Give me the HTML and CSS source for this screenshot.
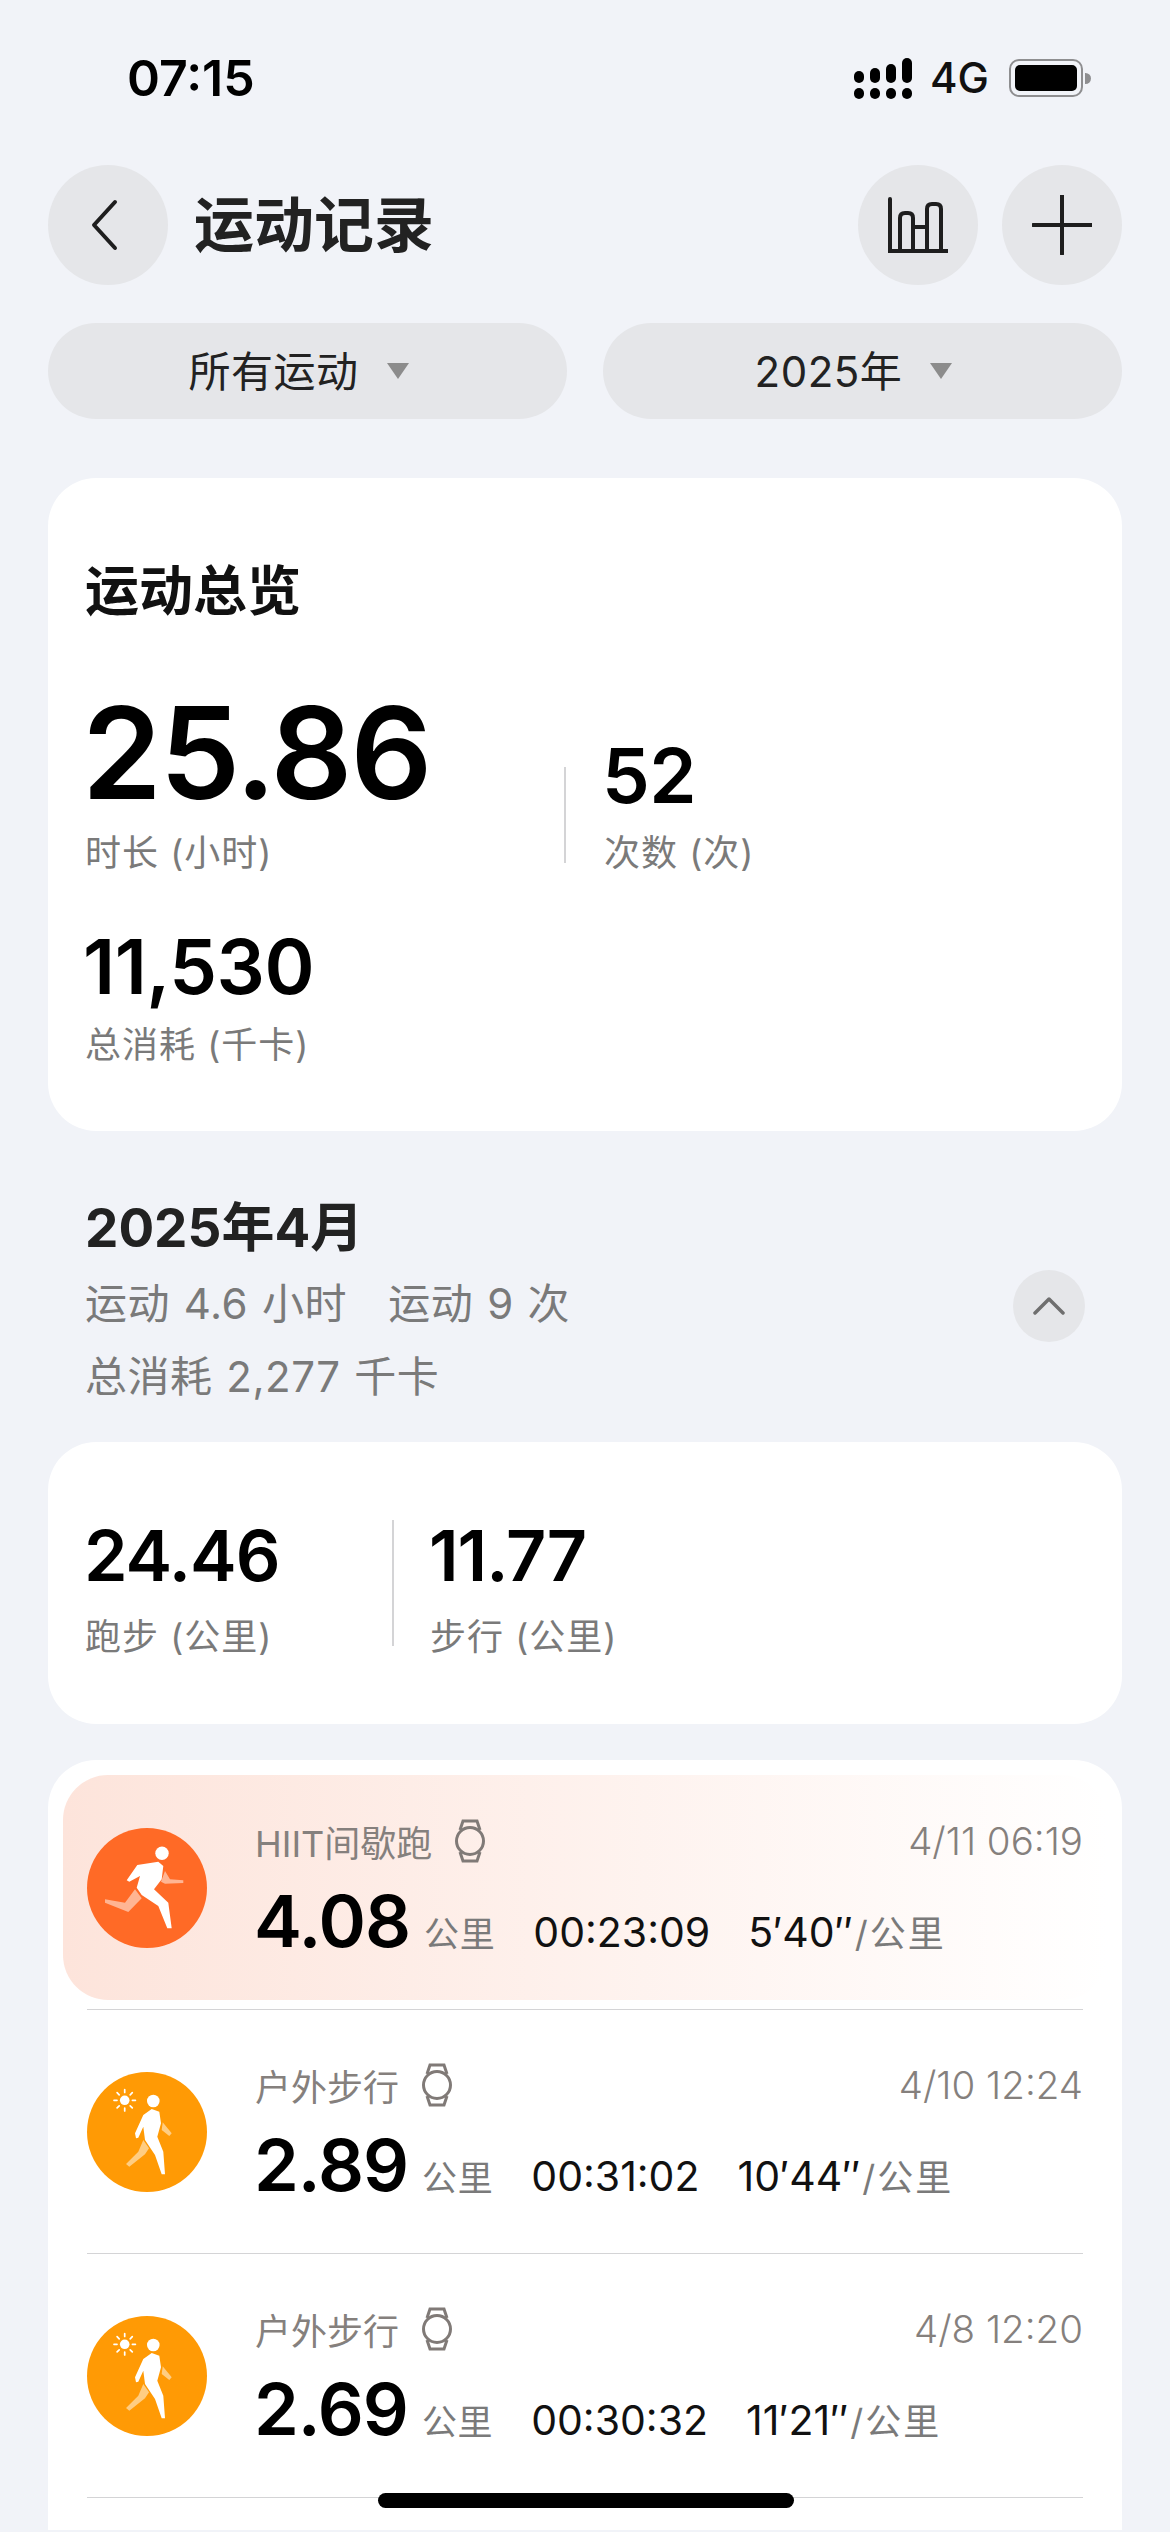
FILE: index.html
```html
<!DOCTYPE html>
<html lang="zh">
<head>
    <meta charset="UTF-8">
    <meta name="viewport" content="width=device-width, initial-scale=1.0">
    <title>运动记录</title>
    <link rel="stylesheet" href="styles.css">
</head>
<body>
    <div class="status-bar">
        <span class="clock">07:15</span>
        <div class="status-right">
            <svg class="signal" width="58" height="41" viewBox="0 0 58 41">
                <rect x="0" y="13" width="10" height="12" rx="5"/>
                <rect x="16" y="10" width="10" height="15" rx="5"/>
                <rect x="32" y="6" width="10" height="19" rx="5"/>
                <rect x="48" y="0" width="10" height="25" rx="5"/>
                <rect x="0" y="30" width="10" height="11" rx="5"/>
                <rect x="16" y="30" width="10" height="11" rx="5"/>
                <rect x="32" y="30" width="10" height="11" rx="5"/>
                <rect x="48" y="30" width="10" height="11" rx="5"/>
            </svg>
            <span class="net">4G</span>
            <div class="battery"><div class="battery-level"></div></div>
            <div class="battery-tip"></div>
        </div>
    </div>

    <header class="top-bar">
        <button class="round-btn">
            <svg width="60" height="60" viewBox="0 0 60 60"><path class="icon-line" d="M37 7 L16 30 L37 53"/></svg>
        </button>
        <h1 class="page-title">运动记录</h1>
        <button class="round-btn push-right">
            <svg width="60" height="60" viewBox="0 0 60 60">
                <path class="icon-line" d="M2 4 V56 M0 56 H60 M12 56 V23 Q12 18 17 18 H20 Q25 18 25 23 V56 M25 32 H39 M39 56 V14 Q39 9 44 9 H48 Q53 9 53 14 V56"/>
            </svg>
        </button>
        <button class="round-btn">
            <svg width="60" height="60" viewBox="0 0 60 60"><path class="icon-line" d="M30 0 V59 M1 30 H60"/></svg>
        </button>
    </header>

    <div class="filters">
        <div class="filter">所有运动<span class="caret"></span></div>
        <div class="filter">2025年<span class="caret"></span></div>
    </div>

    <section class="card overview">
        <h2 class="card-title">运动总览</h2>
        <div class="hero-row">
            <div class="hero-main">
                <div class="num num-xl">25.86</div>
                <div class="label">时长 (小时)</div>
            </div>
            <div class="vline vline-hero"></div>
            <div>
                <div class="num num-lg">52</div>
                <div class="label">次数 (次)</div>
            </div>
        </div>
        <div class="calories">
            <div class="num num-lg">11,530</div>
            <div class="label">总消耗 (千卡)</div>
        </div>
    </section>

    <section class="month">
        <h2 class="month-title">2025年4月</h2>
        <div class="month-row">
            <div class="month-sub">
                <div>运动 4.6 小时&nbsp;&nbsp; 运动 9 次</div>
                <div>总消耗 2,277 千卡</div>
            </div>
            <button class="collapse">
                <svg width="32" height="18" viewBox="0 0 32 18"><path d="M2 16 L16 2 L30 16"/></svg>
            </button>
        </div>
    </section>

    <section class="card distance">
        <div class="distance-col">
            <div class="num num-md">24.46</div>
            <div class="label">跑步 (公里)</div>
        </div>
        <div class="vline vline-dist"></div>
        <div>
            <div class="num num-md">11.77</div>
            <div class="label">步行 (公里)</div>
        </div>
    </section>

    <section class="card records">
        <div class="record record-active">
            <svg class="sport-icon" width="120" height="120" viewBox="0 0 120 120">
                <circle cx="60" cy="60" r="60" fill="#ff6a26"/>
                <g fill="#fff" fill-opacity="0.5">
                    <path d="M78 43 L83 51.3 L96.3 52.3 L96.3 55 L78 55.7 L74 53.7 Z"/>
                    <path d="M48 61.3 L54.7 70.3 L41.3 84 L18 74.7 L18 71.3 L38 74.7 Z"/>
                </g>
                <circle cx="75" cy="25.3" r="6.7" fill="#fff"/>
                <path fill="#fff" d="M39.7 52.3 L50.3 37 L71.3 33.7 L76.3 38 L74.7 51.3 L67 61.3 L81.3 74.7 L84.7 100.3 L80.3 100.3 L71.3 78 L54.7 67 L49.7 59.7 L53 48 L42.3 53.7 Z"/>
            </svg>
            <div class="record-main">
                <div class="record-top">
                    <span class="record-name">HIIT间歇跑</span>
                    <svg class="watch" width="34" height="46" viewBox="0 0 34 46"><path d="M7 12 L10 3 H24 L27 12 M7 34 L10 43 H24 L27 34"/><circle cx="17" cy="23" r="13.5"/></svg>
                    <span class="record-date">4/11 06:19</span>
                </div>
                <div class="record-bottom">
                    <span class="num num-rec">4.08</span>
                    <span class="unit">公里</span>
                    <span class="time">00:23:09</span>
                    <span class="time">5′40″<span class="unit">/公里</span></span>
                </div>
            </div>
        </div>
        <div class="rule"></div>

        <div class="record">
            <svg class="sport-icon" width="120" height="120" viewBox="0 0 120 120">
                <use href="#walker"/>
            </svg>
            <div class="record-main">
                <div class="record-top">
                    <span class="record-name">户外步行</span>
                    <svg class="watch" width="34" height="46" viewBox="0 0 34 46"><path d="M7 12 L10 3 H24 L27 12 M7 34 L10 43 H24 L27 34"/><circle cx="17" cy="23" r="13.5"/></svg>
                    <span class="record-date">4/10 12:24</span>
                </div>
                <div class="record-bottom">
                    <span class="num num-rec">2.89</span>
                    <span class="unit">公里</span>
                    <span class="time">00:31:02</span>
                    <span class="time">10′44″<span class="unit">/公里</span></span>
                </div>
            </div>
        </div>
        <div class="rule"></div>

        <div class="record">
            <svg class="sport-icon" width="120" height="120" viewBox="0 0 120 120">
                <use href="#walker"/>
            </svg>
            <div class="record-main">
                <div class="record-top">
                    <span class="record-name">户外步行</span>
                    <svg class="watch" width="34" height="46" viewBox="0 0 34 46"><path d="M7 12 L10 3 H24 L27 12 M7 34 L10 43 H24 L27 34"/><circle cx="17" cy="23" r="13.5"/></svg>
                    <span class="record-date">4/8 12:20</span>
                </div>
                <div class="record-bottom">
                    <span class="num num-rec">2.69</span>
                    <span class="unit">公里</span>
                    <span class="time">00:30:32</span>
                    <span class="time">11′21″<span class="unit">/公里</span></span>
                </div>
            </div>
        </div>
        <div class="rule"></div>
    </section>

    <div class="home-bar"></div>

    <!-- walking icon, used twice -->
    <svg class="defs" width="0" height="0">
        <defs>
            <g id="walker">
                <circle cx="60" cy="60" r="60" fill="#ff9a05"/>
                <g fill="#fff" fill-opacity="0.5">
                    <path d="M75.7 50.3 L84.7 61.3 L82.3 64 L74.7 58 Z"/>
                    <path d="M56.3 68 L62 76.3 L58 82.3 L42.3 94.7 L39 92 L51.3 79.7 Z"/>
                </g>
                <circle cx="66.3" cy="29" r="6.3" fill="#fff"/>
                <path fill="#fff" d="M49 66.3 L48 61.3 L56.3 43 L64.7 37 L72.3 39.7 L74 51.3 L70.3 64.7 L76.3 79.7 L78 102.3 L74.7 102.3 L68 83 L58 68 L56.3 54.7 L51.3 65.7 Z"/>
                <circle cx="37.7" cy="28.3" r="4.8" fill="#fff"/>
                <path stroke="#fff" stroke-width="1.7" stroke-linecap="round" d="M37.7 17.5 V20.5 M37.7 36 V39 M27 28.3 H30 M45.4 28.3 H48.4 M30.1 20.7 L32.2 22.8 M43.2 33.8 L45.3 35.9 M30.1 35.9 L32.2 33.8 M43.2 22.8 L45.3 20.7"/>
            </g>
        </defs>
    </svg>
</body>
</html>
```

FILE: styles.css
```css
* {
    box-sizing: border-box;
}

html, body {
    margin: 0;
    padding: 0;
}

body {
    position: relative;
    width: 1170px;
    height: 2532px;
    overflow: hidden;
    background-color: #f1f3f8;
    color: #222;
    font-family: Inter, "Noto Sans CJK SC", sans-serif;
}

h1, h2 {
    margin: 0;
}

button {
    padding: 0;
    border: none;
    font: inherit;
}

/* status bar */
.status-bar {
    display: flex;
    justify-content: space-between;
    align-items: center;
    height: 165px;
    padding: 0 79px 9px 127px;
}

.clock {
    font-size: 50px;
    font-weight: 600;
    line-height: 50px;
    color: #000;
}

.status-right {
    display: flex;
    align-items: center;
}

.signal {
    fill: #000;
    margin-right: 18px;
}

.net {
    font-size: 42px;
    font-weight: 500;
    line-height: 44px;
    color: #111;
    margin-right: 20px;
}

.battery {
    width: 74px;
    height: 38px;
    padding: 4px;
    border: 2.5px solid #8e8e90;
    border-radius: 10px;
}

.battery-level {
    width: 100%;
    height: 100%;
    background-color: #000;
    border-radius: 5px;
}

.battery-tip {
    width: 6px;
    height: 11px;
    margin-left: 2px;
    background-color: #8e8e90;
    border-radius: 0 6px 6px 0;
}

/* header */
.top-bar {
    display: flex;
    align-items: center;
    gap: 24px;
    padding: 0 48px;
}

.round-btn {
    display: flex;
    align-items: center;
    justify-content: center;
    flex: none;
    width: 120px;
    height: 120px;
    border-radius: 50%;
    background-color: #e5e6e9;
}

.icon-line {
    fill: none;
    stroke: #1e1e1e;
    stroke-width: 4;
    stroke-linecap: round;
    stroke-linejoin: round;
}

.page-title {
    font-size: 60px;
    font-weight: 700;
    line-height: 70px;
    margin-left: 2px;
    color: #222;
}

.push-right {
    margin-left: auto;
}

/* filters */
.filters {
    display: flex;
    gap: 36px;
    margin: 38px 48px 0;
}

.filter {
    flex: 1;
    display: flex;
    align-items: center;
    justify-content: center;
    height: 96px;
    padding: 0 18px 6px 0;
    border-radius: 48px;
    background-color: #e5e6e9;
    font-size: 42px;
    letter-spacing: 0.5px;
    color: #222;
}

.caret {
    width: 0;
    height: 0;
    margin: 6px 0 0 28px;
    border-left: 11px solid transparent;
    border-right: 11px solid transparent;
    border-top: 16px solid #8c8c8c;
}

/* cards */
.card {
    margin: 0 48px;
    background-color: #fff;
    border-radius: 48px;
}

.num {
    color: #000;
    font-weight: 600;
    letter-spacing: -1px;
}

.num-xl {
    margin-left: -3px;
    font-size: 128px;
    line-height: 130px;
    letter-spacing: -2px;
}

.num-lg {
    margin-left: -2px;
    font-size: 76px;
    line-height: 80px;
    letter-spacing: -0.5px;
}

.num-md {
    margin-left: -1px;
    font-size: 70px;
    line-height: 80px;
}

.label {
    margin-top: 18px;
    font-size: 36px;
    line-height: 40px;
    letter-spacing: 1px;
    color: #7a7a7a;
}

.vline {
    flex: none;
    width: 2px;
    background-color: #d4d4d6;
}

.overview {
    height: 653px;
    margin-top: 59px;
    padding: 82px 37px 0;
}

.card-title {
    font-size: 54px;
    font-weight: 700;
    line-height: 64px;
    color: #111;
}

.hero-row {
    display: flex;
    align-items: flex-end;
    margin-top: 64px;
}

.hero-main {
    width: 479px;
}

.hero-main .label {
    margin-top: 15px;
}

.vline-hero {
    height: 96px;
    margin: 0 38px 10px 0;
}

.calories {
    margin-top: 53px;
}

.calories .label {
    margin-top: 19px;
}

/* month */
.month {
    margin-top: 67px;
    padding: 0 85px;
}

.month-title {
    font-size: 53px;
    font-weight: 700;
    line-height: 60px;
    color: #222;
    margin-bottom: 9px;
}

.month-row {
    display: flex;
    justify-content: space-between;
    align-items: flex-start;
}

.month-sub {
    font-size: 42px;
    line-height: 73px;
    letter-spacing: 0.5px;
    word-spacing: 1.5px;
    color: #7a7a7a;
}

.collapse {
    display: flex;
    align-items: center;
    justify-content: center;
    width: 72px;
    height: 72px;
    margin-top: 3px;
    border-radius: 50%;
    background-color: #e5e6e9;
}

.collapse path {
    fill: none;
    stroke: #6f6f6f;
    stroke-width: 3.5;
    stroke-linecap: round;
    stroke-linejoin: round;
}

.distance {
    display: flex;
    align-items: center;
    height: 282px;
    margin-top: 29px;
    padding: 6px 37px 0;
}

.distance-col {
    width: 307px;
}

.vline-dist {
    height: 126px;
    margin: 0 36px 6px 0;
}

.distance .label {
    margin-top: 21px;
}

/* record list */
.records {
    height: 770px;
    margin-top: 36px;
    padding-top: 15px;
    border-radius: 48px 48px 0 0;
}

.record {
    display: flex;
    align-items: center;
    height: 225px;
    margin: 0 15px;
    padding: 0 24px;
}

.record-active {
    border-radius: 45px;
    background: linear-gradient(90deg, #fde4db, #fff);
}

.sport-icon {
    flex: none;
    margin-right: 48px;
}

.record-main {
    flex: 1;
    padding-top: 6px;
}

.record-top {
    display: flex;
    align-items: center;
    height: 46px;
    font-size: 36px;
    color: #85807d;
}

.watch {
    margin-left: 21px;
}

.watch path, .watch circle {
    fill: none;
    stroke: #807a77;
    stroke-width: 3;
}

.record-date {
    margin-left: auto;
    font-size: 38.5px;
    font-weight: 300;
}

.record-bottom {
    display: flex;
    align-items: baseline;
    margin-top: 14px;
}

.num-rec {
    margin-left: -1px;
    font-size: 72px;
    line-height: 86px;
}

.unit {
    margin-left: 14px;
    font-size: 35px;
    letter-spacing: 0.6px;
    color: #7a7a7a;
}

.time {
    margin-left: 38px;
    font-size: 41px;
    color: #111;
}

.time .unit {
    margin-left: 2px;
    font-size: 36px;
    letter-spacing: 2px;
}

.rule {
    height: 1px;
    margin: 9px 39px;
    background-color: #d4d4d6;
}

/* overlay */
.home-bar {
    position: absolute;
    left: 378px;
    top: 2493px;
    width: 416px;
    height: 15px;
    background-color: #000;
    border-radius: 8px;
}

.defs {
    position: absolute;
}
```
